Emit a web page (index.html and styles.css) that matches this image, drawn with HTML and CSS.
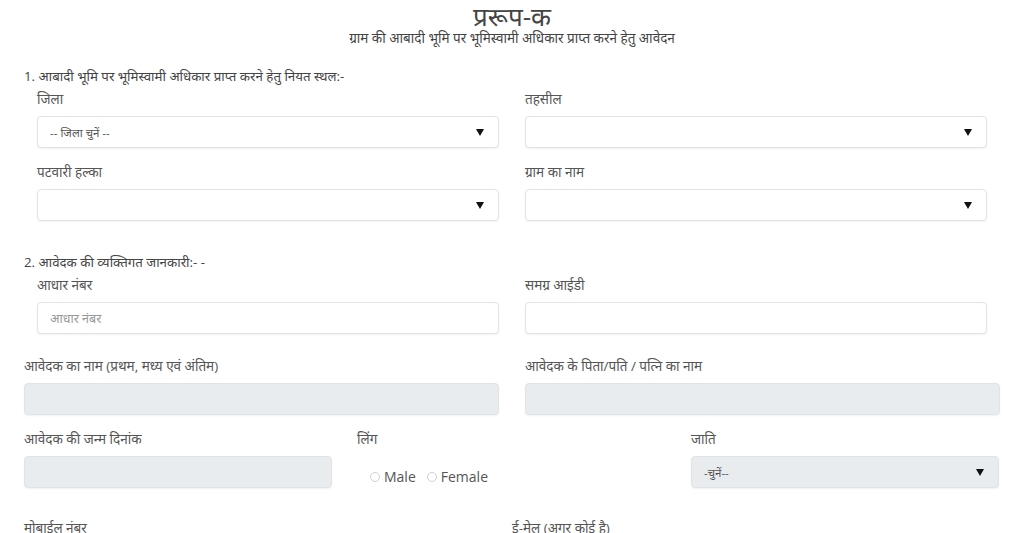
FILE: index.html
```html
<!DOCTYPE html>
<html lang="hi">
<head>
<meta charset="utf-8">
<title>प्ररूप-क</title>
<link rel="stylesheet" href="styles.css">
</head>
<body>
<div class="page">
  <header class="head">
    <h1 class="title">प्ररूप-क</h1>
    <p class="subtitle">ग्राम की आबादी भूमि पर भूमिस्वामी अधिकार प्राप्त करने हेतु आवेदन</p>
  </header>

  <section class="sec1">
    <h2 class="sec-title">1. आबादी भूमि पर भूमिस्वामी अधिकार प्राप्त करने हेतु नियत स्थल:-</h2>
    <div class="grid2 inset">
      <div class="field">
        <label class="lbl">जिला</label>
        <div class="ctl select"><span class="val">-- जिला चुनें --</span><svg class="arrow" width="8" height="7" viewBox="0 0 8 7"><path d="M0 0H8L4 7Z" fill="#111"/></svg></div>
      </div>
      <div class="field">
        <label class="lbl">तहसील</label>
        <div class="ctl select"><span class="val"></span><svg class="arrow" width="8" height="7" viewBox="0 0 8 7"><path d="M0 0H8L4 7Z" fill="#111"/></svg></div>
      </div>
      <div class="field">
        <label class="lbl">पटवारी हल्का</label>
        <div class="ctl select"><span class="val"></span><svg class="arrow" width="8" height="7" viewBox="0 0 8 7"><path d="M0 0H8L4 7Z" fill="#111"/></svg></div>
      </div>
      <div class="field">
        <label class="lbl">ग्राम का नाम</label>
        <div class="ctl select"><span class="val"></span><svg class="arrow" width="8" height="7" viewBox="0 0 8 7"><path d="M0 0H8L4 7Z" fill="#111"/></svg></div>
      </div>
    </div>
  </section>

  <section class="sec2">
    <h2 class="sec-title">2. आवेदक की व्यक्तिगत जानकारी:- -</h2>
    <div class="grid2 inset">
      <div class="field">
        <label class="lbl">आधार नंबर</label>
        <div class="ctl"><span class="ph">आधार नंबर</span></div>
      </div>
      <div class="field">
        <label class="lbl">समग्र आईडी</label>
        <div class="ctl"></div>
      </div>
    </div>
    <div class="grid2 names">
      <div class="field">
        <label class="lbl">आवेदक का नाम (प्रथम, मध्य एवं अंतिम)</label>
        <div class="ctl disabled"></div>
      </div>
      <div class="field">
        <label class="lbl">आवेदक के पिता/पति / पत्नि का नाम</label>
        <div class="ctl disabled"></div>
      </div>
    </div>
    <div class="grid3">
      <div class="field">
        <label class="lbl">आवेदक की जन्म दिनांक</label>
        <div class="ctl disabled"></div>
      </div>
      <div class="field">
        <label class="lbl">लिंग</label>
        <div class="radios">
          <span class="radio"><span class="dot"></span>Male</span>
          <span class="radio"><span class="dot"></span>Female</span>
        </div>
      </div>
      <div class="field">
        <label class="lbl">जाति</label>
        <div class="ctl select disabled"><span class="val">-चुनें--</span><svg class="arrow" width="8" height="7" viewBox="0 0 8 7"><path d="M0 0H8L4 7Z" fill="#111"/></svg></div>
      </div>
    </div>
    <div class="grid2 last">
      <div class="field"><label class="lbl">मोबाईल नंबर</label></div>
      <div class="field"><label class="lbl">ई-मेल (अगर कोई है)</label></div>
    </div>
  </section>
</div>
</body>
</html>
```
FILE: styles.css
```css
* { box-sizing: border-box; }
html, body { margin: 0; padding: 0; background: #fff; }
body {
  font-family: "Open Sans", "Noto Sans", sans-serif;
  color: #555;
  font-size: 13.5px;
  overflow: hidden;
  height: 533px;
}
.page { width: 976px; margin-left: 24px; }
.head { text-align: center; padding-top: 2px; }
.title { margin: 0; font-size: 26px; font-weight: 400; line-height: 28px; color: #444; }
.subtitle { margin: 0; font-size: 13.5px; line-height: 16px; color: #444; }
.sec-title { margin: 0 0 3px; font-size: 13.3px; font-weight: 400; line-height: 20px; color: #444; }
.sec1 { margin-top: 20px; }
.sec2 { margin-top: 31px; }
.grid2 { display: grid; grid-template-columns: 1fr 1fr; column-gap: 26px; }
.grid2.inset { padding: 0 13px; row-gap: 14px; }
.grid2.names { margin-top: 22px; }
.grid3 { display: grid; grid-template-columns: 308px 309px 308px; column-gap: 25px; margin-top: 14px; }
.grid2.last { column-gap: 0; margin-top: 30px; }
.field { display: flex; flex-direction: column; }
.lbl { display: block; line-height: 20px; margin-bottom: 7px; color: #555; }
.ctl {
  height: 32px;
  border: 1px solid #e3e3e3;
  border-radius: 4px;
  background: #fff;
  box-shadow: 0 1px 2px rgba(0,0,0,0.06);
  display: flex;
  align-items: center;
  padding: 0 12px;
  font-size: 12.5px;
  color: #555;
}
.ctl.disabled { background: #e9ecef; border-color: #e1e4e7; }
.select { justify-content: space-between; padding-right: 14px; font-size: 11.5px; }
.arrow { flex: none; }
.ph { color: #999; }
.radios { display: flex; gap: 11px; padding-left: 13px; margin-top: 12px; font-size: 14px; line-height: 18px; color: #555; }
.radio { display: inline-flex; align-items: center; gap: 4px; }
.dot { width: 10px; height: 10px; border: 1px solid #d0d0d0; border-radius: 50%; display: inline-block; }
```
